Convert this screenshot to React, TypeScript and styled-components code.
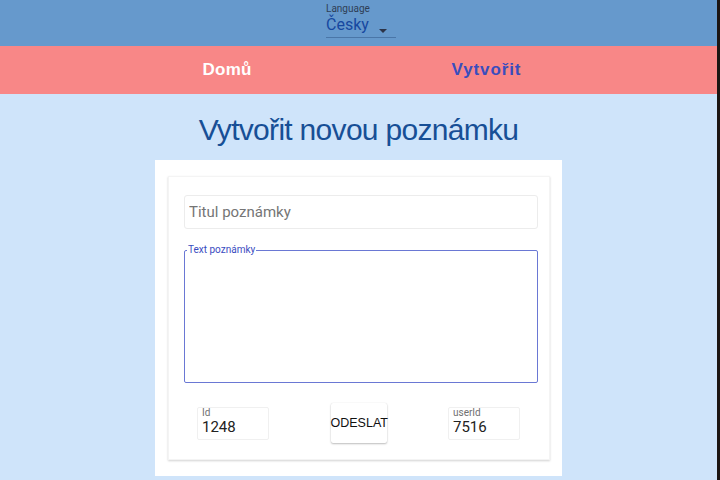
import styled, { createGlobalStyle } from 'styled-components';

const GlobalStyle = createGlobalStyle`
  html, body {
    margin: 0;
    padding: 0;
    background: #cfe4fa;
    font-family: Roboto, "Liberation Sans", sans-serif;
  }
`;

const Page = styled.div`
  min-height: 480px;
  border-right: 3px solid #1c1512;
  box-sizing: border-box;
  background: #cfe4fa;
`;

const TopBar = styled.header`
  height: 46px;
  background: #6699cc;
  display: flex;
  justify-content: center;
  align-items: flex-start;
`;

const LangSelect = styled.div`
  width: 70px;
  margin-left: 5px;
  padding-top: 3px;
  border-bottom: 1px solid #4a76a8;
  height: 34px;
  position: relative;
`;

const LangLabel = styled.div`
  font-size: 10px;
  color: #2f3e55;
  line-height: 12px;
`;

const LangValue = styled.div`
  font-size: 16px;
  color: #1648a0;
  line-height: 20px;
`;

const Arrow = styled.span`
  position: absolute;
  right: 9px;
  top: 29px;
  width: 0;
  height: 0;
  border-left: 4px solid transparent;
  border-right: 4px solid transparent;
  border-top: 4px solid #2c3448;
`;

const NavBar = styled.nav`
  height: 48px;
  background: #f88787;
  display: flex;
  align-items: center;
  justify-content: center;
  gap: 200px;
  padding-left: 7px;
`;

const NavLink = styled.a<{ $active?: boolean }>`
  font-family: "Liberation Sans", Arial, sans-serif;
  font-weight: bold;
  font-size: 17px;
  letter-spacing: ${p => (p.$active ? '0.9px' : '0.2px')};
  color: ${p => (p.$active ? '#3a4dbd' : '#ffffff')};
  text-decoration: none;
`;

const Heading = styled.h1`
  margin: 16px 0 10px;
  text-align: center;
  font-family: "Liberation Sans", Arial, sans-serif;
  font-weight: 400;
  font-size: 30px;
  letter-spacing: -0.7px;
  line-height: 40px;
  color: #174f96;
`;

const Card = styled.section`
  width: 407px;
  margin: 0 auto;
  background: #ffffff;
  padding: 16px 12px 16px 13px;
  box-sizing: border-box;
`;

const Paper = styled.form`
  box-shadow: 0 1px 2px rgba(0, 0, 0, 0.18);
  border: 1px solid #f4f4f4;
  padding: 18px 11px 16px 15px;
  display: flex;
  flex-direction: column;
`;

const TitleInput = styled.input`
  height: 34px;
  box-sizing: border-box;
  border: 1px solid #ececec;
  border-radius: 3px;
  padding: 0 4px;
  font-family: Roboto, sans-serif;
  font-size: 15px;
  color: #333;
  &::placeholder {
    color: #757575;
  }
`;

const TextField = styled.fieldset`
  margin: 16px 0 0;
  height: 138px;
  box-sizing: border-box;
  border: 1px solid #6a78d4;
  border-radius: 2px;
  padding: 0 4px;
`;

const Legend = styled.legend`
  font-size: 10px;
  color: #3a4cbf;
  padding: 0 1px;
  margin-left: -2px;
  line-height: 10px;
`;

const BottomRow = styled.div`
  margin-top: 20px;
  display: flex;
  align-items: center;
  justify-content: space-between;
  padding: 0 18px 0 13px;
`;

const NumberBox = styled.div`
  width: 72px;
  height: 33px;
  box-sizing: border-box;
  border: 1px solid #f0f0f0;
  border-radius: 2px;
  padding: 0 4px;
  display: flex;
  flex-direction: column;
`;

const NumberLabel = styled.span`
  font-size: 10px;
  line-height: 10px;
  color: #707070;
`;

const NumberValue = styled.span`
  font-size: 15px;
  line-height: 18px;
  color: #222;
`;

const SubmitButton = styled.button`
  width: 56px;
  height: 40px;
  background: #ffffff;
  border: none;
  border-radius: 2px;
  box-shadow: 0 1px 2px rgba(0, 0, 0, 0.25), 0 0 1px rgba(0, 0, 0, 0.12);
  font-family: "Liberation Sans", Arial, sans-serif;
  font-size: 12.5px;
  color: #111;
  padding: 0;
`;

export default function App() {
  return (
    <Page>
      <GlobalStyle />
      <TopBar>
        <LangSelect>
          <LangLabel>Language</LangLabel>
          <LangValue>Česky</LangValue>
          <Arrow />
        </LangSelect>
      </TopBar>
      <NavBar>
        <NavLink>Domů</NavLink>
        <NavLink $active>Vytvořit</NavLink>
      </NavBar>
      <Heading>Vytvořit novou poznámku</Heading>
      <Card>
        <Paper>
          <TitleInput placeholder="Titul poznámky" />
          <TextField>
            <Legend>Text poznámky</Legend>
          </TextField>
          <BottomRow>
            <NumberBox>
              <NumberLabel>Id</NumberLabel>
              <NumberValue>1248</NumberValue>
            </NumberBox>
            <SubmitButton type="button">ODESLAT</SubmitButton>
            <NumberBox>
              <NumberLabel>userId</NumberLabel>
              <NumberValue>7516</NumberValue>
            </NumberBox>
          </BottomRow>
        </Paper>
      </Card>
    </Page>
  );
}
